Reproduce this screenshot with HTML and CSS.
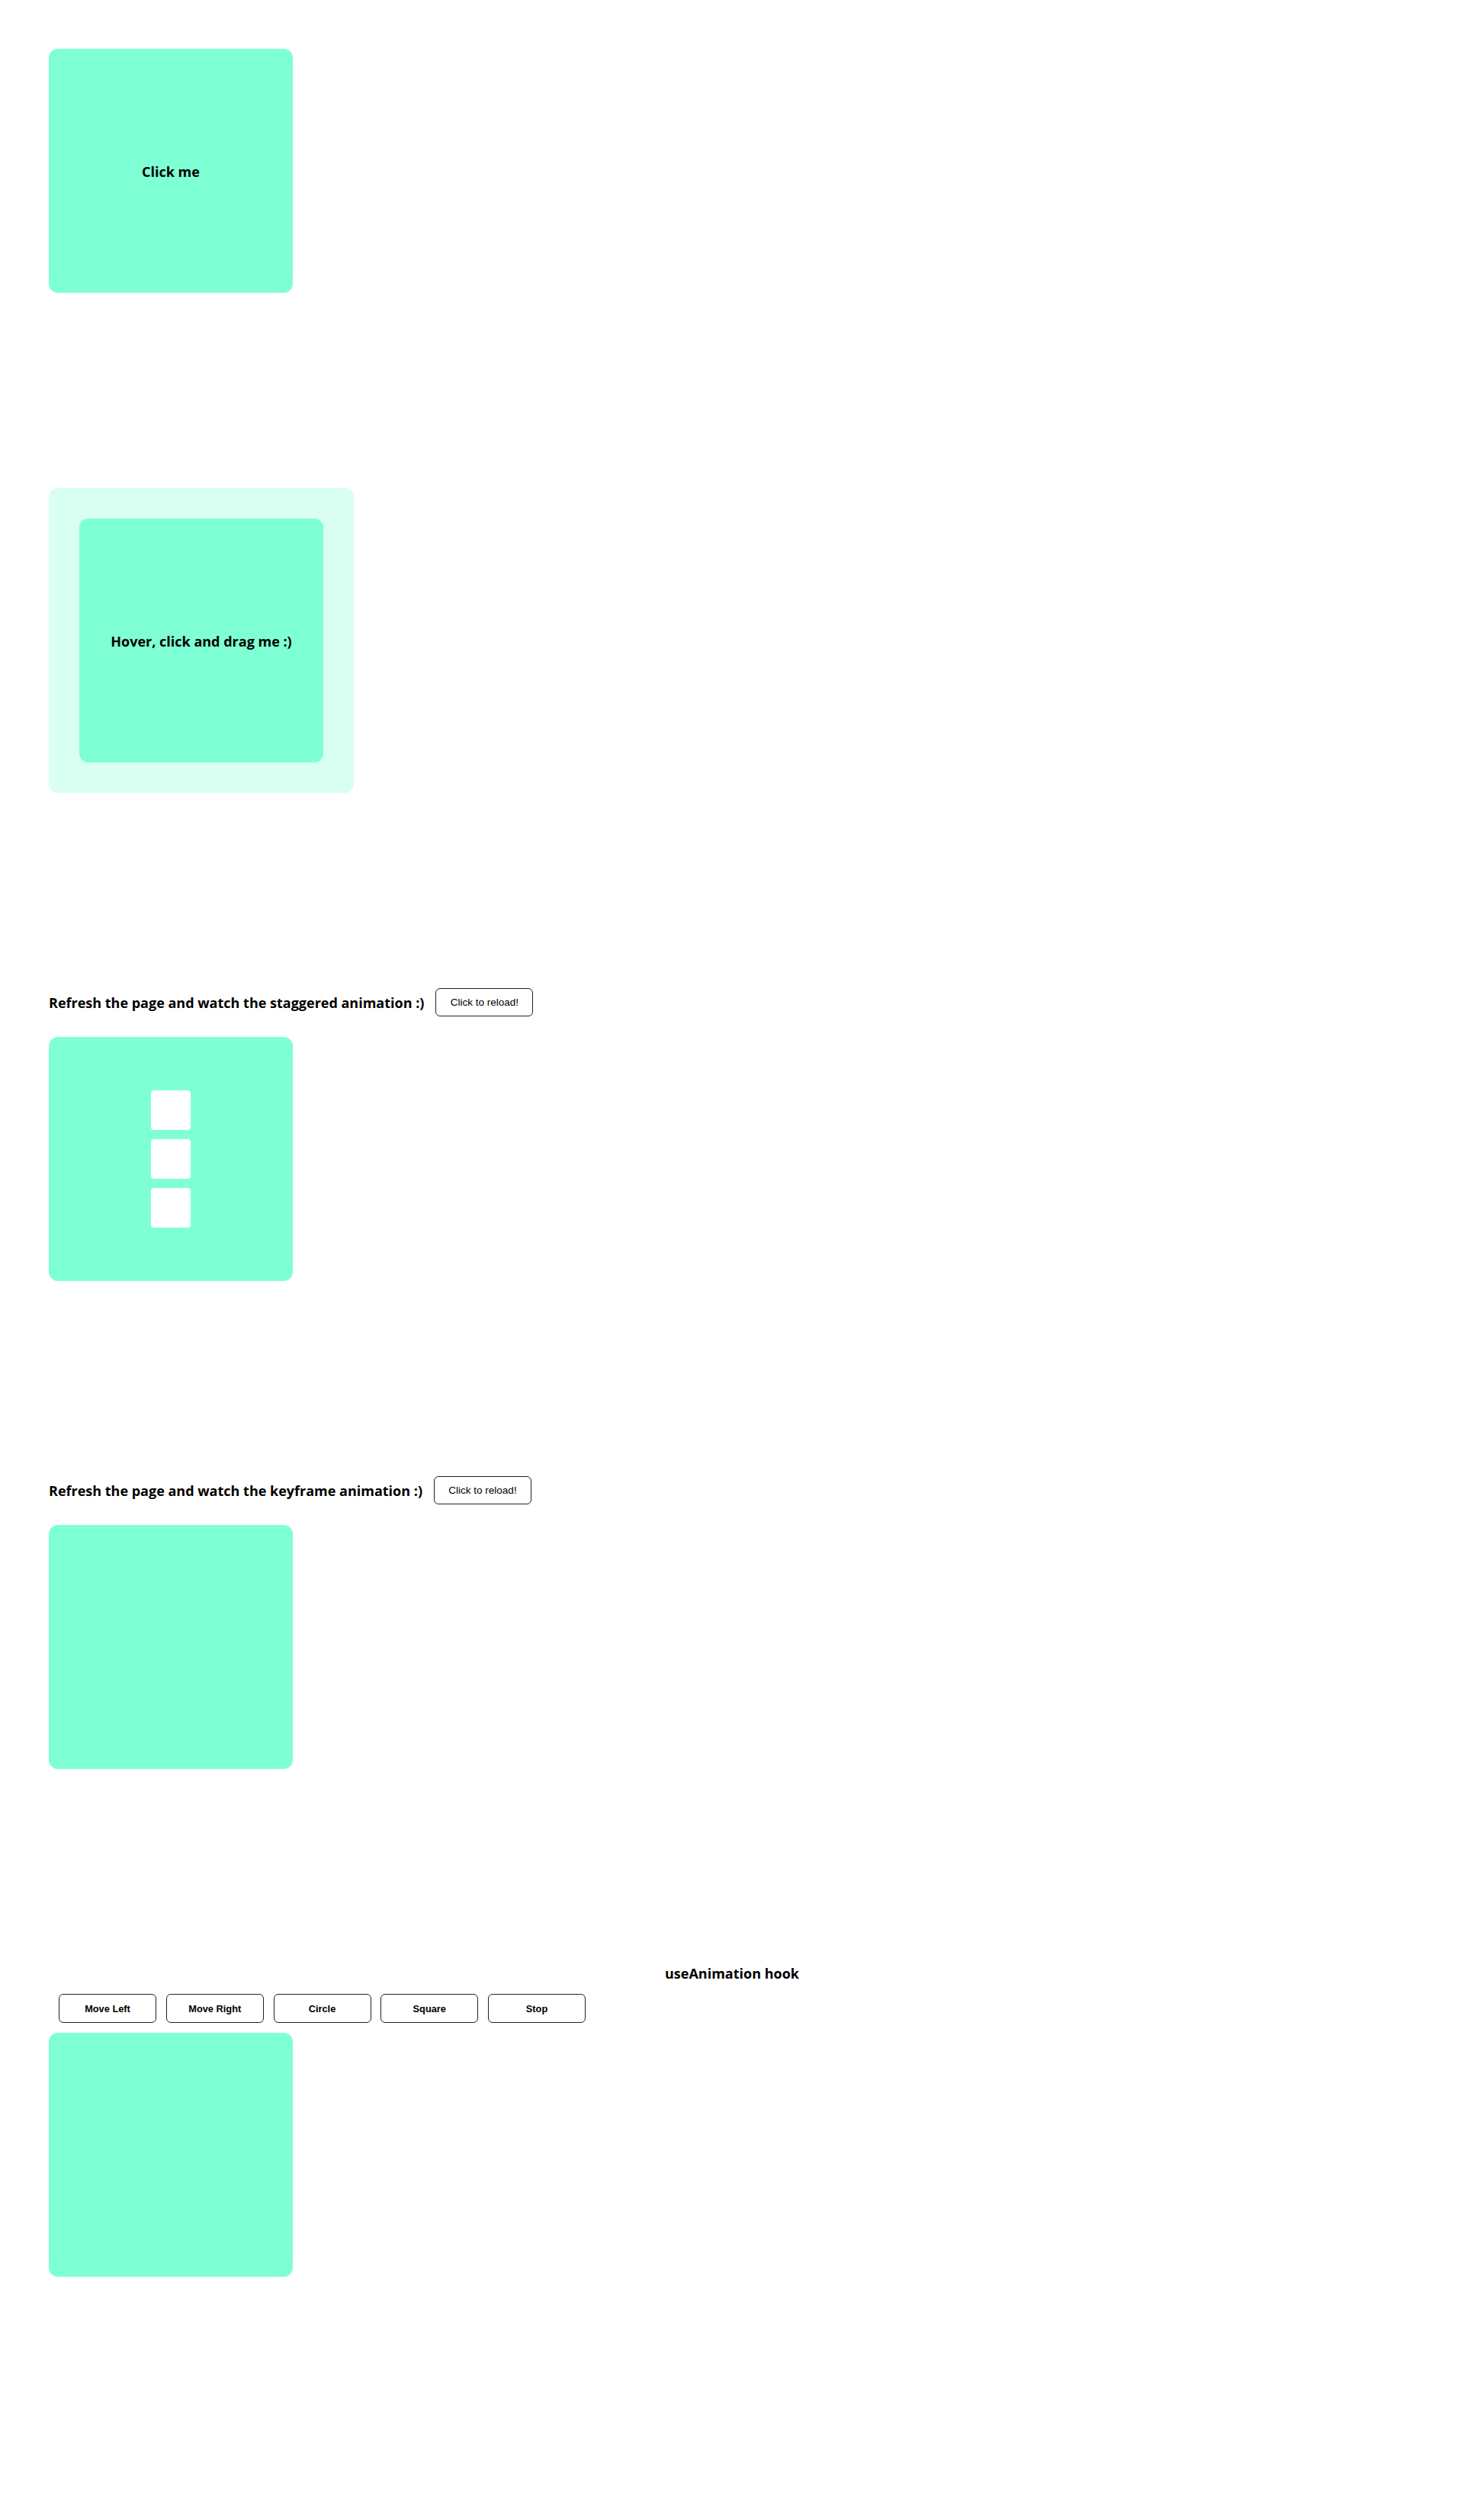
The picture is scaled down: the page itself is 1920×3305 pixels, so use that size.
FILE: index.html
```html
<!DOCTYPE html>
<html lang="en">
<head>
<meta charset="utf-8">
<title>Framer Motion examples</title>
<link rel="stylesheet" href="styles.css">
</head>
<body>
<main class="page">
  <section class="example">
    <div class="box box--center"><span class="label">Click me</span></div>
  </section>

  <section class="example">
    <div class="drag-area">
      <div class="box box--center"><span class="label">Hover, click and drag me :)</span></div>
    </div>
  </section>

  <section class="example">
    <div class="example-header">
      <h2 class="title">Refresh the page and watch the staggered animation :)</h2>
      <button class="btn btn--reload" type="button">Click to reload!</button>
    </div>
    <div class="box box--stack">
      <div class="item"></div>
      <div class="item"></div>
      <div class="item"></div>
    </div>
  </section>

  <section class="example">
    <div class="example-header">
      <h2 class="title">Refresh the page and watch the keyframe animation :)</h2>
      <button class="btn btn--reload" type="button">Click to reload!</button>
    </div>
    <div class="box"></div>
  </section>

  <section class="example example--hook">
    <h2 class="hook-title">useAnimation hook</h2>
    <div class="controls">
      <button class="btn btn--control" type="button">Move Left</button>
      <button class="btn btn--control" type="button">Move Right</button>
      <button class="btn btn--control" type="button">Circle</button>
      <button class="btn btn--control" type="button">Square</button>
      <button class="btn btn--control" type="button">Stop</button>
    </div>
    <div class="box"></div>
  </section>
</main>
</body>
</html>
```

FILE: styles.css
```css
* {
  box-sizing: border-box;
}

html,
body {
  margin: 0;
  padding: 0;
  background: #ffffff;
}

body {
  font-family: "Open Sans", "Noto Sans", sans-serif;
  color: #000000;
}

.page {
  padding: 64px 64px 1px 64px;
}

.example {
  margin-bottom: 256px;
}

.box {
  width: 320px;
  height: 320px;
  border-radius: 12px;
  background: #7fffd4;
}

.box--center {
  display: flex;
  align-items: center;
  justify-content: center;
}

.label {
  font-size: 18px;
  font-weight: 700;
  line-height: 24px;
  padding-top: 2px;
}

.drag-area {
  width: 400px;
  height: 400px;
  padding: 40px;
  border-radius: 12px;
  background: rgba(127, 255, 212, 0.3);
}

.example-header {
  display: flex;
  align-items: center;
  height: 37px;
  margin-bottom: 27px;
}

.title {
  margin: 0;
  font-size: 18px;
  font-weight: 700;
  line-height: 24px;
}

.btn {
  width: 128px;
  margin: 0;
  padding: 0;
  background: #ffffff;
  border: 1px solid #222222;
  border-radius: 6px;
  color: #000000;
  font-family: "Liberation Sans", Arial, sans-serif;
}

.btn--reload {
  height: 37px;
  margin-left: 15px;
  font-size: 13.5px;
  font-weight: 400;
}

.box--stack {
  display: flex;
  flex-direction: column;
  align-items: center;
  justify-content: center;
  gap: 12px;
}

.item {
  width: 52px;
  height: 52px;
  border-radius: 4px;
  background: #ffffff;
}

.hook-title {
  margin: 0;
  text-align: center;
  font-size: 18px;
  font-weight: 700;
  line-height: 24px;
}

.controls {
  display: flex;
  gap: 12.75px;
  margin: 15px 0 13px 13px;
}

.btn--control {
  height: 38px;
  font-size: 12.8px;
  font-weight: 700;
}
```
